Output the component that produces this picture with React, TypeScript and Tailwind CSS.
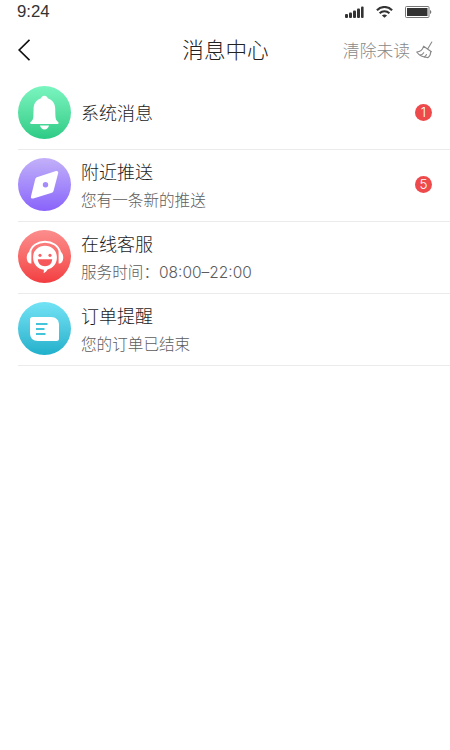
import React from "react";

interface MessageItem {
  title: string;
  subtitle?: string;
  time?: string;
  badge?: number;
  gradient: string;
  icon: React.ReactNode;
}

const messages: MessageItem[] = [
  {
    title: "系统消息",
    badge: 1,
    gradient: "from-[#7af5c0] to-[#2bcb85]",
    icon: <BellIcon />,
  },
  {
    title: "附近推送",
    subtitle: "您有一条新的推送",
    badge: 5,
    gradient: "from-[#c3b0f8] to-[#8a62fa]",
    icon: <CompassIcon />,
  },
  {
    title: "在线客服",
    subtitle: "服务时间：",
    time: "08:00–22:00",
    gradient: "from-[#fb8d8d] to-[#f23c41]",
    icon: <ServiceIcon />,
  },
  {
    title: "订单提醒",
    subtitle: "您的订单已结束",
    gradient: "from-[#72e3f5] to-[#1fb0cb]",
    icon: <OrderIcon />,
  },
];

export default function App() {
  return (
    <div className="w-[450px] h-[750px] bg-white overflow-hidden font-['Liberation_Sans','Noto_Sans_CJK_SC',sans-serif]">
      <StatusBar />
      <Header />
      <main className="pl-[18px]">
        {messages.map((item) => (
          <MessageRow key={item.title} item={item} />
        ))}
      </main>
    </div>
  );
}

function StatusBar() {
  return (
    <div className="flex items-center justify-between h-6 pl-[17px] pr-[18px]">
      <span className="text-[16.8px] leading-6 text-[#333]">9:24</span>
      <div className="flex items-center">
        <svg className="w-[19px] h-3 mr-3" viewBox="0 0 19 12" fill="#333">
          <rect x="0" y="8" width="3" height="4" rx="1" />
          <rect x="4" y="6.5" width="3" height="5.5" rx="1" />
          <rect x="8" y="4.5" width="3" height="7.5" rx="1" />
          <rect x="12" y="2.5" width="3" height="9.5" rx="1" />
          <rect x="16" y="0.5" width="2.6" height="11.5" rx="1" />
        </svg>
        <svg className="w-[17px] h-3 mr-3" viewBox="0 0 17 12" fill="none" stroke="#333" strokeWidth="2.1">
          <path d="M.9 4.2C5.2-.1 11.8-.1 16.1 4.2" />
          <path d="M3.6 7.3c2.8-2.7 7-2.7 9.8 0" />
          <path d="M8.5 11.8 5.9 9.4c1.5-1.3 3.7-1.3 5.2 0z" fill="#333" stroke="none" />
        </svg>
        <svg className="w-[27px] h-3" viewBox="0 0 27 12">
          <rect x=".5" y=".5" width="23.5" height="11" rx="1" fill="none" stroke="#777" />
          <rect x="2" y="2" width="20.5" height="8" fill="#333" />
          <path d="M25.2 4v4c1.4-.6 1.4-3.4 0-4z" fill="#555" />
        </svg>
      </div>
    </div>
  );
}

function Header() {
  return (
    <header className="grid grid-cols-[1fr_auto_1fr] items-center h-[54px] pl-[18px] pr-[17px]">
      <svg className="w-3 h-[22px] mb-[2px]" viewBox="0 0 12 22" fill="none" stroke="#111" strokeWidth="1.7">
        <path d="M11.5.8 1.2 11l10.3 10.2" />
      </svg>
      <h1 className="text-[21.6px] leading-[30px] font-light text-[#222]">消息中心</h1>
      <div className="flex items-center justify-end gap-[6px] text-[16.8px] font-light text-[#888]">
        <span className="pt-px">清除未读</span>
        <svg className="w-[17px] h-[18px] mb-[2px]" viewBox="0 0 17 18" fill="none" stroke="#888" strokeWidth="1.1" strokeLinecap="round" strokeLinejoin="round">
          <path d="m15.8 1-4 6.7M7.6 5.2l7.8 5.5M7.4 5.6c-.7 3-3.2 5-6.7 5.4 2.2 3.2 6 5.3 11.3 5.6 2-1.5 2.8-3.5 2.7-6" />
          <path d="M4.3 14.1c1.5-.3 2.6-1.1 3.4-2.4M8.3 16c1-.6 1.7-1.4 2.2-2.5" />
        </svg>
      </div>
    </header>
  );
}

function MessageRow({ item }: { item: MessageItem }) {
  return (
    <div className="flex items-center h-[72px] pr-[18px] pb-[2px] border-b border-[#ebebeb]">
      <div className={`w-[53px] h-[53px] rounded-full shrink-0 bg-linear-to-b ${item.gradient}`}>
        {item.icon}
      </div>
      <div className={`flex-1 ml-[10px] ${item.subtitle ? "pt-[4px]" : "pt-[2px]"}`}>
        <div className="text-[18px] leading-7 font-light text-[#1c1c1c]">{item.title}</div>
        {item.subtitle && (
          <div className="flex items-center text-[15.6px] leading-[27px] font-light text-[#5c5c5c]">
            <span>{item.subtitle}</span>
            {item.time && <span className="font-['Inter'] text-[15.5px]">{item.time}</span>}
          </div>
        )}
      </div>
      {item.badge && (
        <span className="flex items-center justify-center w-[17px] h-[17px] rounded-full bg-[#ee4a4c] font-['Inter'] text-[13.5px] leading-none font-light text-white">
          {item.badge}
        </span>
      )}
    </div>
  );
}

function BellIcon() {
  return (
    <svg className="w-full h-full" viewBox="0 0 53 53" fill="#fff">
      <path d="M26.4 9.8c1.8 0 2.9 1 3.4 2.4 4.4 1.4 7.2 5 7.4 10l.2 7.3c.1 3.2.8 5.100 2.700 6.500.9.600.6 1.900-.5 1.900h-26.400c-1.100 0-1.400-1.300-.5-1.900 1.900-1.400 2.600-3.300 2.700-6.500l.2-7.300c.2-5 3-8.600 7.400-10 .5-1.400 1.600-2.400 3.400-2.400z" />
      <path d="M22 39.5h9c-.5 2.4-2.2 3.9-4.500 3.900s-4-1.500-4.500-3.900z" />
    </svg>
  );
}

function CompassIcon() {
  return (
    <svg className="w-full h-full" viewBox="0 0 53 53">
      <path
        fillRule="evenodd"
        fill="#fff"
        d="M18.8 19.3 38 13c1.5-.5 2.600.6 2.200 2.100L35.5 33c-.2.9-.7 1.500-1.600 1.800l-18.600 5.700c-1.600.5-2.800-.6-2.300-2.200L17.3 21c.2-.8.7-1.400 1.500-1.700zM27.5 24a2.700 2.700 0 1 0 0 5.400 2.700 2.700 0 0 0 0-5.400z"
      />
    </svg>
  );
}

function ServiceIcon() {
  return (
    <svg className="w-full h-full" viewBox="0 0 53 53">
      <path d="M12 22.5C14.5 8.300 39.500 8.300 42 22.500" fill="none" stroke="#fff" strokeWidth="2" />
      <path d="M13.400 21.500c-6.200-.8-6.200 12.800 0 12zM40.600 21.500c6.200-.8 6.200 12.800 0 12z" fill="#fff" />
      <path d="M27 15.800c7.200 0 11.900 5.100 11.900 11.800 0 6.300-3.800 10.700-9.400 11.800-.9 1.800-2.100 3-4 3.800.4-1.200.5-2.300.2-3.500-6.100-.6-10.600-5.500-10.600-12.100 0-6.700 4.700-11.800 11.900-11.800z" fill="#fff" />
      <circle cx="22" cy="25.3" r="1.6" fill="#f76266" />
      <circle cx="32" cy="25.3" r="1.6" fill="#f76266" />
      <path d="M19.800 29.300h14.400c-.3 4.500-3.200 6.900-7.200 6.900s-6.900-2.400-7.200-6.900z" fill="#f5575b" />
    </svg>
  );
}

function OrderIcon() {
  return (
    <svg className="w-full h-full" viewBox="0 0 53 53">
      <path d="M14.500 15H33c5 0 8 3 8 8v13.500a2.500 2.500 0 0 1-2.500 2.500H20c-5 0-8-3-8-8V17.500a2.500 2.500 0 0 1 2.500-2.500z" fill="#fff" />
      <path d="M18 22h11.500M18 27h8.500M18 32h9.500" fill="none" stroke="#43c4da" strokeWidth="2" />
    </svg>
  );
}
